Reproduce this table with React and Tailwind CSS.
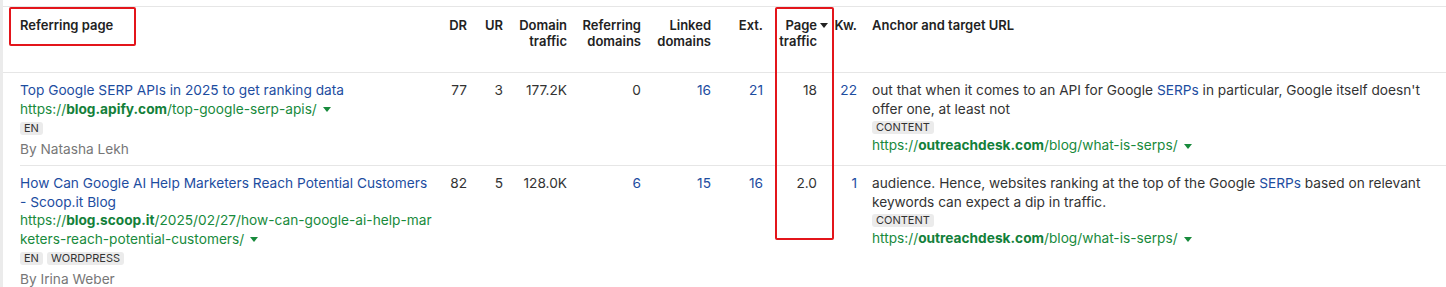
import { useState } from 'react';

const rows = [
    {
        title: 'Top Google SERP APIs in 2025 to get ranking data',
        domain: 'blog.apify.com',
        path: '/top-google-serp-apis/',
        tags: ['EN'],
        author: 'By Natasha Lekh',
        dr: '77',
        ur: '3',
        traffic: '177.2K',
        refDomains: { v: '0', link: false },
        linked: '16',
        ext: '21',
        pageTraffic: '18',
        kw: '22',
        anchorBefore: 'out that when it comes to an API for Google ',
        anchorAfter: " in particular, Google itself doesn't offer one, at least not",
        target: { domain: 'outreachdesk.com', path: '/blog/what-is-serps/' },
    },
    {
        title: 'How Can Google AI Help Marketers Reach Potential Customers - Scoop.it Blog',
        domain: 'blog.scoop.it',
        path: '/2025/02/27/how-can-google-ai-help-marketers-reach-potential-customers/',
        tags: ['EN', 'WORDPRESS'],
        author: 'By Irina Weber',
        dr: '82',
        ur: '5',
        traffic: '128.0K',
        refDomains: { v: '6', link: true },
        linked: '15',
        ext: '16',
        pageTraffic: '2.0',
        kw: '1',
        anchorBefore: 'audience. Hence, websites ranking at the top of the Google ',
        anchorAfter: ' based on relevant keywords can expect a dip in traffic.',
        target: { domain: 'outreachdesk.com', path: '/blog/what-is-serps/' },
    },
];

function Caret({ className }) {
    return (
        <svg viewBox="0 0 8 5" className={className}>
            <path d="M0 0h8L4 5z" fill="currentColor" />
        </svg>
    );
}

function Tag({ children }) {
    return (
        <span className="inline-flex h-[13px] items-center rounded-[3px] bg-[#ebebeb] px-[4px] text-[11px] leading-none text-[#333]">
            {children}
        </span>
    );
}

function Url({ domain, path, breakAll }) {
    return (
        <div className={`text-[#188a3c] ${breakAll ? 'break-all' : ''}`}>
            https://<span className="font-bold text-[#13803a]">{domain}</span>
            {path}
            <Caret className="ml-[6px] inline-block h-[5px] w-[8px] align-middle text-[#188a3c]" />
        </div>
    );
}

export default function App() {
    const [sort] = useState('page_traffic');

    return (
        <div
            className="relative h-[287px] w-[1446px] overflow-hidden bg-white pt-[6px] text-[13.7px] text-[#333]"
            style={{ fontFamily: 'Inter, "Noto Sans", sans-serif' }}
        >
            <div className="absolute top-0 bottom-0 left-0 w-[3px] bg-[#ebebeb]" />

            <div className="ml-[3px] border-t border-[#e6e6e6]">
                {/* header */}
                <div className="flex h-[66px] border-b border-[#e6e6e6] pt-[10px] text-[13px] font-semibold leading-[16px] text-[#222]">
                    <div className="w-[437px] pl-[17px]">Referring page</div>
                    <div className="w-[27px] text-right">DR</div>
                    <div className="w-[36px] text-right">UR</div>
                    <div className="w-[64px] text-right">Domain traffic</div>
                    <div className="w-[74px] text-right">Referring domains</div>
                    <div className="w-[70px] text-right">Linked domains</div>
                    <div className="w-[52px] text-right">Ext.</div>
                    <div className="relative w-[54px] text-right">
                        Page traffic
                        {sort === 'page_traffic' && (
                            <Caret className="absolute top-[6px] left-[57px] h-[5px] w-[8px] text-[#222]" />
                        )}
                    </div>
                    <div className="w-[40px] text-right">Kw.</div>
                    <div className="flex-1 pl-[15px]">Anchor and target URL</div>
                </div>

                {/* rows */}
                {rows.map((row, i) => (
                    <div
                        key={i}
                        className={`ml-[17px] flex pt-[8px] leading-[18.5px] ${i === 0 ? 'h-[93px] border-b border-[#e6e6e6]' : ''}`}
                    >
                        <div className="w-[420px] pr-[5px]">
                            <div className="text-[#1d4d9f]">{row.title}</div>
                            <Url domain={row.domain} path={row.path} breakAll />
                            <div className="mt-[4px] flex gap-[4px]">
                                {row.tags.map((t) => (
                                    <Tag key={t}>{t}</Tag>
                                ))}
                            </div>
                            <div className="mt-[5px] text-[#777]">{row.author}</div>
                        </div>
                        <div className="w-[27px] text-right">{row.dr}</div>
                        <div className="w-[36px] text-right">{row.ur}</div>
                        <div className="w-[64px] text-right">{row.traffic}</div>
                        <div className={`w-[74px] text-right ${row.refDomains.link ? 'text-[#1d4d9f]' : ''}`}>
                            {row.refDomains.v}
                        </div>
                        <div className="w-[70px] text-right text-[#1d4d9f]">{row.linked}</div>
                        <div className="w-[52px] text-right text-[#1d4d9f]">{row.ext}</div>
                        <div className="w-[54px] text-right">{row.pageTraffic}</div>
                        <div className="w-[40px] text-right text-[#1d4d9f]">{row.kw}</div>
                        <div className="flex-1 pr-[20px] pl-[15px]">
                            <div>
                                {row.anchorBefore}
                                <span className="text-[#1d4d9f]">SERPs</span>
                                {row.anchorAfter}
                            </div>
                            <div className="flex h-[18px] items-center">
                                <Tag>CONTENT</Tag>
                            </div>
                            <Url domain={row.target.domain} path={row.target.path} />
                        </div>
                    </div>
                ))}
            </div>

            {/* red highlight annotations */}
            <div className="pointer-events-none absolute top-[7px] left-[9px] h-[39px] w-[127px] rounded-[2px] border-2 border-[#e3151b]" />
            <div className="pointer-events-none absolute top-[7px] left-[775px] h-[233px] w-[59px] rounded-[2px] border-2 border-[#e3151b]" />
        </div>
    );
}
